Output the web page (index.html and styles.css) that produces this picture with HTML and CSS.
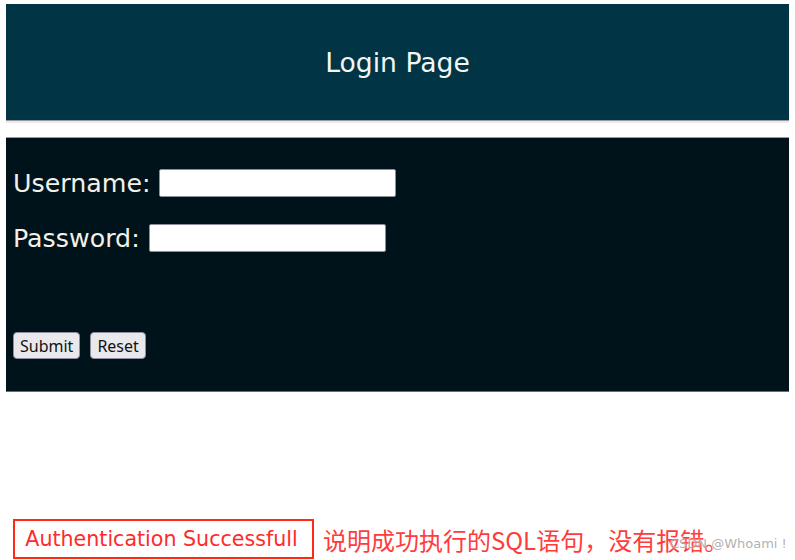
FILE: index.html
```html
<!DOCTYPE html>
<html lang="en">
<head>
    <meta charset="UTF-8">
    <title>Login Page</title>
    <link rel="stylesheet" href="styles.css">
</head>
<body>
    <div class="header">
        <h1>Login Page</h1>
    </div>

    <form class="login-form">
        <div class="field">
            <label for="username">Username:</label>
            <input type="text" id="username" name="username">
        </div>
        <div class="field">
            <label for="password">Password:</label>
            <input type="password" id="password" name="password">
        </div>
        <div class="actions">
            <button type="submit">Submit</button>
            <button type="reset">Reset</button>
        </div>
    </form>

    <div class="result">
        <div class="auth-box">Authentication Successfull</div>
        <span class="note">说明成功执行的SQL语句，没有报错。</span>
        <span class="watermark">CSDN @Whoami !</span>
    </div>
</body>
</html>
```

FILE: styles.css
```css
* {
    box-sizing: border-box;
}

body {
    margin: 0;
    padding: 4px 6px 0;
    background: #ffffff;
    font-family: "DejaVu Sans", sans-serif;
}

.header {
    height: 117px;
    background-color: #013545;
    border-bottom: 1px solid #8a9ea5;
    box-shadow: 0 2px 0 #fde3e3;
    display: flex;
    align-items: center;
    justify-content: center;
}

.header h1 {
    margin: 0;
    font-size: 26.6px;
    font-weight: normal;
    color: #f3f6f7;
}

.login-form {
    margin-top: 16px;
    height: 255px;
    background-color: #01131a;
    border-top: 1px solid #8c9ea3;
    border-bottom: 1px solid #5f6f75;
    padding: 30px 7px 0;
}

.field {
    display: flex;
    align-items: center;
    height: 30px;
    margin-bottom: 25px;
}

.field label {
    font-size: 25.3px;
    color: #f1f1ea;
    margin-right: 9px;
}

.field input {
    width: 237px;
    height: 28px;
    border: 1px solid #8a8f99;
    border-radius: 2px;
    background: #ffffff;
}

.actions {
    display: flex;
    gap: 10px;
    margin-top: 79px;
}

.actions button {
    height: 27px;
    padding: 0 6px;
    font-family: "Noto Sans", sans-serif;
    font-size: 16px;
    color: #111;
    background: #e9e9ed;
    border: 1px solid #8f8f9d;
    border-radius: 4px;
}

.result {
    display: flex;
    align-items: center;
    margin-top: 127px;
    padding-left: 7px;
    position: relative;
}

.auth-box {
    width: 301px;
    height: 40px;
    border: 2px solid #ff2a12;
    color: #ff2a2a;
    font-size: 20.6px;
    display: flex;
    align-items: center;
    justify-content: center;
    padding-right: 4px;
}

.note {
    margin-left: 9px;
    font-family: "Noto Sans CJK SC", sans-serif;
    font-size: 24px;
    color: #ff3b3b;
    white-space: nowrap;
}

.watermark {
    position: absolute;
    left: 664px;
    top: 17px;
    white-space: nowrap;
    font-family: "DejaVu Sans", sans-serif;
    font-size: 13px;
    color: rgba(150, 150, 150, 0.75);
    text-shadow: 0 0 2px #ffffff;
}
```
